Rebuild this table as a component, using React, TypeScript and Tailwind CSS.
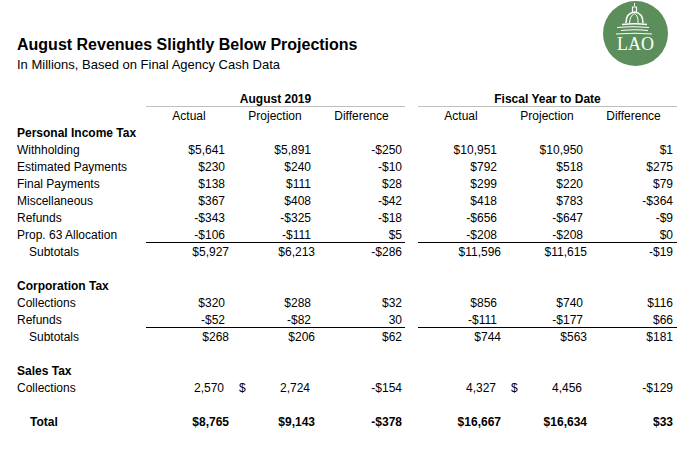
import type { ReactNode } from "react";

type Kind = "item" | "head" | "sub" | "total" | "blank" | "sales";

type RowData = {
  label?: string;
  kind: Kind;
  values?: string[];
  line?: boolean;
};

const rows: RowData[] = [
  { label: "Personal Income Tax", kind: "head" },
  { label: "Withholding", kind: "item", values: ["$5,641", "$5,891", "-$250", "$10,951", "$10,950", "$1"] },
  { label: "Estimated Payments", kind: "item", values: ["$230", "$240", "-$10", "$792", "$518", "$275"] },
  { label: "Final Payments", kind: "item", values: ["$138", "$111", "$28", "$299", "$220", "$79"] },
  { label: "Miscellaneous", kind: "item", values: ["$367", "$408", "-$42", "$418", "$783", "-$364"] },
  { label: "Refunds", kind: "item", values: ["-$343", "-$325", "-$18", "-$656", "-$647", "-$9"] },
  { label: "Prop. 63 Allocation", kind: "item", values: ["-$106", "-$111", "$5", "-$208", "-$208", "$0"], line: true },
  { label: "Subtotals", kind: "sub", values: ["$5,927", "$6,213", "-$286", "$11,596", "$11,615", "-$19"] },
  { kind: "blank" },
  { label: "Corporation Tax", kind: "head" },
  { label: "Collections", kind: "item", values: ["$320", "$288", "$32", "$856", "$740", "$116"] },
  { label: "Refunds", kind: "item", values: ["-$52", "-$82", "30", "-$111", "-$177", "$66"], line: true },
  { label: "Subtotals", kind: "sub", values: ["$268", "$206", "$62", "$744", "$563", "$181"] },
  { kind: "blank" },
  { label: "Sales Tax", kind: "head" },
  { label: "Collections", kind: "sales", values: ["2,570", "2,724", "-$154", "4,327", "4,456", "-$129"] },
  { kind: "blank" },
  { label: "Total", kind: "total", values: ["$8,765", "$9,143", "-$378", "$16,667", "$16,634", "$33"] },
];

// 17px rows like the spreadsheet; text sits 1px low like Excel draws it
const Cell = ({ children, className = "" }: { children?: ReactNode; className?: string }) => (
  <div className={`h-[17px] leading-[19px] whitespace-nowrap box-border ${className}`}>{children}</div>
);

const Logo = () => (
  <div className="w-[65px] h-[65px] rounded-full bg-[#5c8e5c] flex flex-col items-center mt-[1px] mr-[30px]">
    <svg width="65" height="35" viewBox="0 0 65 35" className="shrink-0">
      <path d="M31.5 2 L31.5 5" stroke="white" strokeWidth="1" />
      <path d="M29.5 11 L29.5 6 L33.5 6 L33.5 11" stroke="white" strokeWidth="1.2" fill="none" />
      <path d="M23 22 Q23 12 31.5 11 Q40 12 40 22" stroke="white" strokeWidth="1.6" fill="none" />
      <path d="M26.5 22 Q27 14.5 31.5 12.5 M35 22 Q35.5 15 31.5 12.5" stroke="white" strokeWidth="1" fill="none" />
      <path d="M19 23.5 Q32 22 44 23.5" stroke="white" strokeWidth="1.4" fill="none" />
      <path d="M14 26.5 Q30 25 46 26.5" stroke="white" strokeWidth="1.2" fill="none" />
      <path d="M18 29.5 Q33 28 45 29.5" stroke="white" strokeWidth="1.1" fill="none" />
      <path d="M13 33 Q33 31.5 49 33" stroke="white" strokeWidth="1" fill="none" />
    </svg>
    <span className="font-['Liberation_Serif',serif] text-[18px] leading-[18px] text-white -mt-[1px]">LAO</span>
  </div>
);

const DataRow = ({ row }: { row: RowData }) => {
  if (row.kind === "blank") {
    return <Cell className="col-span-8" />;
  }
  if (row.kind === "head") {
    return <Cell className="col-span-8 pl-[17px] font-bold">{row.label}</Cell>;
  }
  const v = row.values ?? [];
  const bold = row.kind === "total" ? "font-bold" : "";
  const shifted = row.kind === "sub" || row.kind === "total";
  const pad = shifted ? "pr-[3px]" : row.kind === "sales" ? "pr-[8px]" : "pr-[7px]";
  const line = row.line ? "border-b border-black" : "";
  const labelPad = row.kind === "sub" ? "pl-[29px]" : row.kind === "total" ? "pl-[30px]" : "pl-[17px]";

  const moneyCell = (text: string) =>
    row.kind === "sales" ? (
      <Cell className={`flex justify-between pl-[7px] ${pad} ${line}`}>
        <span>$</span>
        <span>{text}</span>
      </Cell>
    ) : (
      <Cell className={`text-right ${pad} ${line} ${bold}`}>{text}</Cell>
    );

  return (
    <>
      <Cell className={`${labelPad} ${bold}`}>{row.label}</Cell>
      <Cell className={`text-right ${pad} ${line} ${bold}`}>{v[0]}</Cell>
      {moneyCell(v[1])}
      <Cell className={`text-right pr-[3px] ${line} ${bold}`}>{v[2]}</Cell>
      <Cell />
      <Cell className={`text-right ${pad} ${line} ${bold}`}>{v[3]}</Cell>
      {moneyCell(v[4])}
      <Cell className={`text-right pr-[4px] ${line} ${bold}`}>{v[5]}</Cell>
    </>
  );
};

const App = () => {
  return (
    <div className="w-[698px] h-[455px] bg-white text-black font-['Liberation_Sans',Arial,sans-serif] overflow-hidden">
      <div className="h-[90px] flex justify-between items-start">
        <div className="pl-[17px] pt-[36px]">
          <h1 className="text-[16px] leading-[18px] font-bold">August Revenues Slightly Below Projections</h1>
          <p className="text-[13px] leading-[15px] mt-[3px]">In Millions, Based on Final Agency Cash Data</p>
        </div>
        <Logo />
      </div>

      <div className="grid grid-cols-[146px_86px_86px_87px_13px_86px_86px_87px] text-[12px]">
        <Cell />
        <Cell className="col-span-3 text-center font-bold border-b border-[#bfbfbf]">August 2019</Cell>
        <Cell />
        <Cell className="col-span-3 text-center font-bold border-b border-[#bfbfbf]">Fiscal Year to Date</Cell>

        <Cell />
        <Cell className="text-center">Actual</Cell>
        <Cell className="text-center">Projection</Cell>
        <Cell className="text-center">Difference</Cell>
        <Cell />
        <Cell className="text-center">Actual</Cell>
        <Cell className="text-center">Projection</Cell>
        <Cell className="text-center">Difference</Cell>

        {rows.map((row, i) => (
          <DataRow key={i} row={row} />
        ))}
      </div>
    </div>
  );
};

export default App;
